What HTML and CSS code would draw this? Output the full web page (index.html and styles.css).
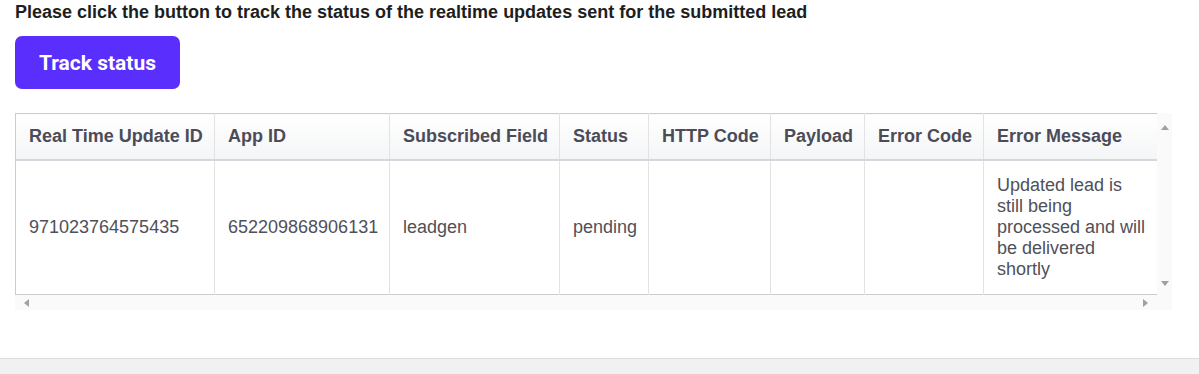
FILE: index.html
```html
<!DOCTYPE html>
<html>
<head>
<meta charset="utf-8">
<link rel="stylesheet" href="styles.css">
</head>
<body>
<div class="page">
  <main class="main">
    <p class="intro">Please click the button to track the status of the realtime updates sent for the submitted lead</p>
    <button class="track-btn" type="button">Track status</button>
    <div class="scrollbox">
      <div class="viewport">
        <table class="updates">
          <colgroup>
            <col class="c1"><col class="c2"><col class="c3"><col class="c4"><col class="c5"><col class="c6"><col class="c7"><col class="c8">
          </colgroup>
          <thead>
            <tr>
              <th>Real Time Update ID</th>
              <th>App ID</th>
              <th>Subscribed Field</th>
              <th>Status</th>
              <th>HTTP Code</th>
              <th>Payload</th>
              <th>Error Code</th>
              <th>Error Message</th>
            </tr>
          </thead>
          <tbody>
            <tr>
              <td>971023764575435</td>
              <td>652209868906131</td>
              <td>leadgen</td>
              <td>pending</td>
              <td></td>
              <td></td>
              <td></td>
              <td>Updated lead is still being processed and will be delivered shortly</td>
            </tr>
          </tbody>
        </table>
      </div>
      <div class="vbar">
        <span class="arrow up"></span>
        <span class="arrow down"></span>
      </div>
      <div class="hbar">
        <span class="arrow left"></span>
        <span class="arrow right"></span>
      </div>
      <div class="corner"></div>
    </div>
  </main>
  <footer class="footer"></footer>
</div>
</body>
</html>
```

FILE: styles.css
```css
html, body {
  margin: 0;
  padding: 0;
  background: #ffffff;
}

.page {
  display: flex;
  flex-direction: column;
  height: 374px;
  overflow: hidden;
}

.main {
  height: 358px;
  flex: none;
  padding: 2px 0 0 15px;
  box-sizing: border-box;
  display: flex;
  flex-direction: column;
  align-items: flex-start;
}

.intro {
  margin: 0;
  font-family: "Liberation Sans", Arial, sans-serif;
  font-weight: bold;
  font-size: 18px;
  line-height: 21px;
  color: #1c1e21;
}

.track-btn {
  margin-top: 13px;
  width: 165px;
  height: 53px;
  border: none;
  border-radius: 7px;
  background: #5a2efc;
  color: #ffffff;
  font-family: Roboto, "Liberation Sans", sans-serif;
  font-weight: bold;
  font-size: 21px;
  padding: 0;
  cursor: pointer;
}

.scrollbox {
  margin-top: 24px;
  display: grid;
  grid-template-columns: 1142px 15px;
  grid-template-rows: auto 15px;
  background: #fafafa;
}

.viewport {
  overflow: hidden;
  background: #ffffff;
}

.updates {
  width: 1142px;
  table-layout: fixed;
  border-collapse: collapse;
  border: 1px solid #cccccc;
  font-family: "Liberation Sans", Arial, sans-serif;
  font-size: 18px;
  line-height: 21px;
}

.c1 { width: 199px; }
.c2 { width: 175px; }
.c3 { width: 170px; }
.c4 { width: 89px; }
.c5 { width: 122px; }
.c6 { width: 94px; }
.c7 { width: 119px; }
.c8 { width: 174px; }

.updates th {
  padding: 12px 10px 12px 13px;
  text-align: left;
  font-weight: bold;
  color: #4b4c58;
  background: linear-gradient(#ffffff, #f4f5f6);
  border-left: 1px solid #e3e3e6;
  border-bottom: 2px solid #d6d7dc;
  white-space: nowrap;
}

.updates td {
  padding: 14px 10px 14px 13px;
  vertical-align: middle;
  color: #4f5059;
  border-left: 1px solid #e3e3e6;
}

.updates th:first-child,
.updates td:first-child {
  border-left: none;
}

.vbar {
  display: flex;
  flex-direction: column;
  justify-content: space-between;
  align-items: center;
  padding: 12px 0 9px;
  grid-row: 1;
  grid-column: 2;
}

.hbar {
  display: flex;
  justify-content: space-between;
  align-items: center;
  padding: 0 9px 0 9px;
  grid-row: 2;
  grid-column: 1;
}

.arrow {
  width: 0;
  height: 0;
  border-style: solid;
  border-color: transparent;
}

.arrow.up {
  border-width: 0 4.5px 5px 4.5px;
  border-bottom-color: #a0a0a0;
}

.arrow.down {
  border-width: 5px 4.5px 0 4.5px;
  border-top-color: #a0a0a0;
}

.arrow.left {
  border-width: 4.5px 5px 4.5px 0;
  border-right-color: #a0a0a0;
}

.arrow.right {
  border-width: 4.5px 0 4.5px 5px;
  border-left-color: #a0a0a0;
}

.footer {
  flex: 1;
  background: #f1f1f1;
  border-top: 1px solid #dddde2;
}
```
